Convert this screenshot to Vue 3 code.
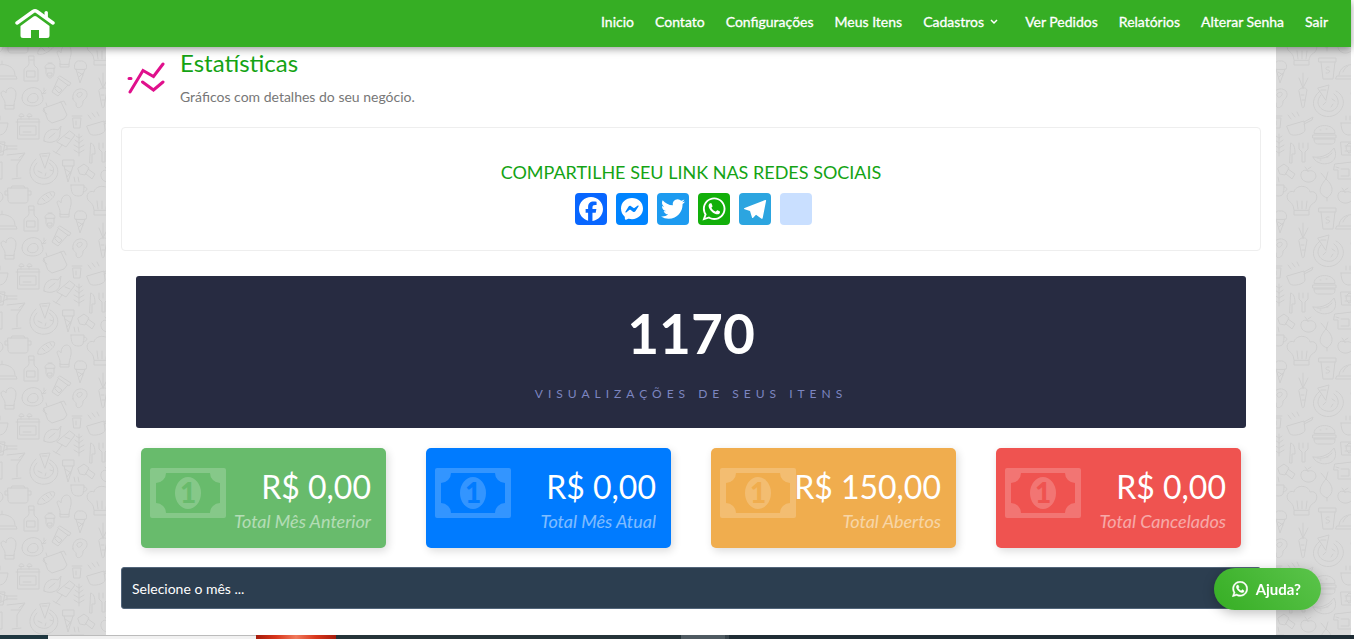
<script setup>
const links = [
  { label: 'Inicio' },
  { label: 'Contato' },
  { label: 'Configurações' },
  { label: 'Meus Itens' },
  { label: 'Cadastros', menu: true },
  { label: 'Ver Pedidos' },
  { label: 'Relatórios' },
  { label: 'Alterar Senha' },
  { label: 'Sair' }
]

const whatsapp =
  'M16.21 4.41C9.973 4.41 4.917 9.465 4.917 15.7c0 2.134.592 4.13 1.62 5.832L4.5 27.59l6.25-2.002a11.241 11.241 0 0 0 5.46 1.404c6.234 0 11.29-5.055 11.29-11.29 0-6.237-5.056-11.292-11.29-11.292zm0 20.69c-1.91 0-3.69-.57-5.173-1.553l-3.61 1.156 1.173-3.49a9.345 9.345 0 0 1-1.79-5.512c0-5.18 4.217-9.4 9.4-9.4 5.183 0 9.397 4.22 9.397 9.4 0 5.188-4.214 9.4-9.398 9.4zm5.293-6.832c-.284-.155-1.673-.906-1.934-1.012-.265-.106-.455-.16-.658.12s-.78.91-.954 1.096c-.176.186-.345.203-.628.048-.282-.154-1.2-.494-2.264-1.517-.83-.795-1.373-1.76-1.53-2.055-.158-.295 0-.445.15-.584.134-.124.3-.326.45-.488.15-.163.203-.28.306-.47.104-.19.06-.36-.005-.506-.066-.147-.59-1.587-.81-2.173-.218-.586-.46-.498-.63-.505-.168-.007-.358-.038-.55-.045-.19-.007-.51.054-.78.332-.277.274-1.05.943-1.1 2.362-.055 1.418.926 2.826 1.064 3.023.137.2 1.874 3.272 4.76 4.537 2.888 1.264 2.9.878 3.43.85.53-.027 1.734-.633 2-1.297.266-.664.287-1.24.22-1.363-.07-.123-.26-.203-.54-.357z'

const networks = [
  { name: 'Facebook', tone: 'facebook', path: 'M28 16c0-6.627-5.373-12-12-12S4 9.373 4 16c0 5.628 3.875 10.35 9.101 11.647v-7.98h-2.474V16H13.1v-1.58c0-4.085 1.849-5.978 5.859-5.978.76 0 2.072.15 2.608.298v3.325c-.283-.03-.775-.045-1.386-.045-1.967 0-2.728.745-2.728 2.683V16h3.92l-.673 3.667h-3.247v8.245C23.395 27.195 28 22.135 28 16' },
  { name: 'Messenger', tone: 'messenger', path: 'M16 5C9.8 5 5 9.5 5 15.6c0 3.2 1.3 5.9 3.5 7.8.2.2.3.4.3.7l.1 1.9c0 .6.6 1 1.2.8l2.200-1c.2-.1.4-.1.6 0 1 .3 2 .4 3.100.4 6.200 0 11-4.500 11-10.600S22.200 5 16 5zm6.600 8.200-3.200 5.100c-.5.8-1.600 1-2.400.4l-2.600-1.900c-.2-.2-.5-.2-.8 0l-3.400 2.600c-.5.3-1.100-.2-.8-.7l3.200-5.100c.5-.8 1.600-1 2.400-.4l2.600 1.900c.2.2.5.2.8 0l3.400-2.600c.5-.3 1.100.2.8.7z' },
  { name: 'Twitter', tone: 'twitter', path: 'M28 8.557a9.913 9.913 0 0 1-2.828.775 4.93 4.93 0 0 0 2.166-2.725 9.738 9.738 0 0 1-3.13 1.194 4.92 4.92 0 0 0-3.593-1.55 4.924 4.924 0 0 0-4.794 6.049c-4.09-.21-7.72-2.17-10.15-5.15a4.942 4.942 0 0 0-.665 2.477c0 1.71.87 3.214 2.19 4.1a4.968 4.968 0 0 1-2.23-.616v.06c0 2.39 1.7 4.38 3.952 4.83-.414.115-.85.174-1.297.174-.318 0-.626-.03-.928-.086a4.935 4.935 0 0 0 4.6 3.42 9.893 9.893 0 0 1-6.114 2.107c-.398 0-.79-.023-1.175-.068a13.953 13.953 0 0 0 7.55 2.213c9.056 0 14.01-7.507 14.01-14.013 0-.213-.005-.426-.015-.637.96-.695 1.795-1.56 2.455-2.55z' },
  { name: 'WhatsApp', tone: 'whatsapp', path: whatsapp },
  { name: 'Telegram', tone: 'telegram', path: 'M26.100 7 5.600 15c-.8.3-.8 1 0 1.300l5.400 1.800 2 6.400c.2.600.8.700 1.200.2l2.800-2.900 5.200 3.800c.7.4 1.300.1 1.500-.7L27.100 7.800c.2-.7-.3-1.100-1-.8z' },
  { name: 'Copiar link', tone: 'blank', path: '' }
]

const cards = [
  { value: 'R$ 0,00', label: 'Total Mês Anterior', tone: 'green' },
  { value: 'R$ 0,00', label: 'Total Mês Atual', tone: 'blue' },
  { value: 'R$ 150,00', label: 'Total Abertos', tone: 'orange' },
  { value: 'R$ 0,00', label: 'Total Cancelados', tone: 'red' }
]
</script>

<template>
  <div class="page">
    <svg class="wallpaper" aria-hidden="true">
      <defs>
        <g id="doodles" fill="none" stroke="#cecece" stroke-width="1" stroke-linejoin="round" stroke-linecap="round">
          <!-- covered dish, bottle, jar -->
          <path d="M137 76h29l1 3h-31zM139 75c1-14 26-14 26 0M152 64v-3M143 72c1-3 3-5 5-6" />
          <path d="M29 56h5v8c0 3 4 3 4 6v11H24V70c0-3 5-3 5-6zM27 71h8v6h-8zM29 60h5" />
          <path d="M45 68c-1-6 11-6 10 0zM46 68v4c0 8 8 8 8 0v-4M48 73h4v3h-4zM48 63h4" />
          <!-- mitts -->
          <path d="M60 64c1-5-3-9-3-12 1-2 3-1 4 1 0-9 9-11 10-3 1 6-2 9-2 14zM60 64v3h9v-3" />
          <path d="M5 105c1-5-4-8-4-12 1-3 4-2 5 0 0-7 10-7 10 1 0 5-2 7-2 11zM5 105v4h9v-4" />
          <!-- bread, pots -->
          <path d="M38 54c-3-4 10-14 16-12 4 4-10 15-16 12zM42 48l3 3M46 45l3 3M50 43l2 3" />
          <path d="M8 38h20v12c0 3-2 3-3 3H11c-2 0-3-1-3-3zM8 41H5v4h3M28 41h3v4h-3M11 38l1-2h12l1 2" />
          <path d="M44 108l17-6 6 13-3 4-12 4-4-3zM47 106l-1-3M60 102l4-1 2 4M44 108l-1 3 4 3" />
          <!-- cones -->
          <path d="M75 69c-2-4 1-9 5-8 5-1 8 4 6 8zM76 69l4 14 5-14M78 72l5 3M79 77l4-4" />
          <path d="M63 10h11v6H63zM64 16l4 16 5-16M65 19l6 4M67 27l5-7" />
          <!-- chef hat -->
          <path d="M94 60c-1-7-3-7-6-10-3-6 2-10 6-8 1-7 14-8 16 0 6-2 9 5 5 10-3 2-5 3-6 8zM94 61v4h15v-4M98 59l-1-8M102 59v-8M106 59l1-8" />
          <!-- roast on a plate -->
          <path d="M22 98c0-12 18-14 20-4l4-4M42 94l4-1M42 95c4 7-3 11-9 11s-11-2-11-8M28 101c-3-5 8-12 10-4 1 5-6 8-10 4zM44 91v-3" />
          <!-- tilted cup -->
          <path d="M60 76l11 7-2 3-11-8zM58 79l-6 13 6 4 10-11M57 86l5 4-3 3-4-4z" />
          <!-- steak -->
          <path d="M73 99c-2-9 8-13 13-8 3 5-1 8-3 10 0 8-7 8-7 4 1-3-2-3-3-6zM77 94c3-3 6-2 5 1-1 2-5 4-5 0z" />
          <!-- stove -->
          <path d="M18 119h21v20H18zM16 122h24M20 126h16v9H20zM23 132h8M19 116c0-3 5-3 5 0zM27 116c0-3 5-3 5 0zM21 119v-2M29 119v-2" />
          <!-- small cup, saucepan -->
          <path d="M73 118h8l-1 10h-6zM72 116h10M76 121v4" />
          <path d="M87 126l17-5 1 9c0 4-12 7-15 4zM104 122l9-5-1 3-8 4M91 119l-3-4M95 117l-3-4M99 116l-2-4" />
          <!-- lemon, glasses -->
          <path d="M44 141c-1-8 6-14 14-11l3-4-1 6c1 8-8 13-16 9zM49 138l6-5" />
          <path d="M70 131l5 4-9 12-9-5zM62 145l-6 8M53 151l7 4M65 137l5 2" />
          <path d="M7 5l18-2-8 12v12M12 29l9-1M11 10h9M19 8l5-4" />
          <!-- herb -->
          <path d="M79 134v22M79 138l-3-2M79 138l3-2M79 143l-4-3M79 143l4-3M79 148l-5-3M79 148l5-3M79 153l-5-3M79 153l5-3" />
          <!-- cutlery -->
          <path d="M91 143c4 1 4 8 4 11h-3v9h-2zM99 143v6l3 3v10h3v-10l3-3v-6M103 143v5" />
          <!-- carrot -->
          <path d="M99 90c2-3 7-3 8 0l-3 17c-1 1-2 1-2 0zM103 88l-4-10M103 88v-15M103 88l5-10M101 95h3M102 100h3" />
          <!-- soda -->
          <path d="M119 58h17v4h-17zM121 62l2 17h10l2-17M129 67c-4-1-4 3-1 3s2 4-2 3" />
          <!-- pizzas -->
          <path d="M120 91c-16 13 0 31 15 24 12-7 10-20 1-24M121 95c-8 9 1 18 11 16 8-3 8-13 2-17M118 88l11-3-3 15zM121 90h5M123 105l3-3M132 99l3 2M131 107l2-3" />
          <path d="M36 9c-14 13-2 30 14 24 11-6 10-18 0-23M37 13c-8 8 0 17 10 15 8-3 9-11 2-15M40 4l10-1-5 15zM42 6h5M38 21l4 2M50 20l3 1M45 26l1-3" />
          <!-- burger, melon -->
          <path d="M114 133c0-10 21-10 21 0zM113 135h23v3h-23zM114 139h21c0 5-2 5-4 5h-13c-2 0-4-1-4-5M120 130h1M126 129h1" />
          <path d="M113 157c9 1 16-2 21-9 8 17-16 21-21 9zM117 158c7 1 11-1 15-5M120 160h1M127 157h1" />
          <!-- jug, hammer -->
          <path d="M135 14l17-2v17h-14v-9h-4zM141 19h8v7h-8M136 17l3 1" />
          <path d="M78 18l6-4 5 4-4 7-5-1zM88 19l7 5-3 5-7-6" />
          <!-- fruit -->
          <path d="M108 21c-6-3-9 3-6 8 3 4 11 5 14-2 0-6-4-7-8-6zM108 21l-3-4M108 19l3-2" />
          <path d="M145 42c-6-3-9 3-6 8 3 4 11 5 14-2 0-6-4-7-8-6zM145 42l-3-4M145 40l3-2" />
          <path d="M126 29c-8 9-8 15 1 19 7-5 7-12-1-19zM126 29l-5-6M126 29l2-7M127 48v3" />
          <!-- coffee, ladle, bowl, glass -->
          <path d="M71 35h13c0 9-1 11-6 11s-7-3-7-11zM84 37c5 0 3 5-1 5M75 32l-1-5M79 32l-1-5" />
          <path d="M149 143l8 3h10M149 153l8-4h10M157 146v4M149 143c-4 3-4 7 0 10" />
          <path d="M141 123h17c-1 8-4 12-9 12s-8-4-8-12zM146 120v-4M150 120v-4" />
          <path d="M141 142h14l-2 13h-11zM145 146h6v5h-6" />
        </g>
        <pattern id="kitchen" width="150" height="150" patternUnits="userSpaceOnUse">
          <use href="#doodles" />
          <use href="#doodles" x="-150" />
          <use href="#doodles" y="-150" />
          <use href="#doodles" x="-150" y="-150" />
        </pattern>
      </defs>
      <rect width="100%" height="100%" fill="#dadada" />
      <rect width="100%" height="100%" fill="url(#kitchen)" />
    </svg>

    <header class="topbar">
      <a class="home" href="#" aria-label="Inicio">
        <svg width="40" height="30" viewBox="0 0 40 30" aria-hidden="true">
          <path d="M2 14 18 2.500Q20 1.200 22 2.500L38 14" fill="none" stroke="#fff" stroke-width="3.400" stroke-linecap="round" stroke-linejoin="round" />
          <path d="M29.500 7V3.500q0-1.500 1.700-1.500t1.700 1.500V10z" fill="#fff" />
          <path d="M5.500 17 18.500 7.500q1.500-1 3 0L34.500 17v9.500q0 2.500-2.500 2.500h-8v-8h-8v8H8q-2.500 0-2.500-2.500z" fill="#fff" />
        </svg>
      </a>
      <nav class="menu">
        <a v-for="link in links" :key="link.label" href="#" :class="{ dropdown: link.menu }">
          {{ link.label }}
          <svg v-if="link.menu" width="8" height="6" viewBox="0 0 8 6" aria-hidden="true">
            <path d="M1 1l3 3 3-3" fill="none" stroke="currentColor" stroke-width="1.500" />
          </svg>
        </a>
      </nav>
    </header>

    <main class="content">
      <section class="intro">
        <svg class="chart" width="38" height="34" viewBox="0 0 38 34" fill="none" stroke="#e0108c" stroke-width="3" stroke-linecap="round" aria-hidden="true">
          <path d="M3 31 16 9.500l10.500 6L36 3" />
          <path d="M15.500 21 26.500 29 36 21M2 17.500h2" />
        </svg>
        <div>
          <h1>Estatísticas</h1>
          <p>Gráficos com detalhes do seu negócio.</p>
        </div>
      </section>

      <section class="share">
        <h2>COMPARTILHE SEU LINK NAS REDES SOCIAIS</h2>
        <div class="networks">
          <a v-for="n in networks" :key="n.name" href="#" :class="n.tone" :aria-label="n.name">
            <svg width="32" height="32" viewBox="0 0 32 32" aria-hidden="true"><path :d="n.path" fill="#fff" /></svg>
          </a>
        </div>
      </section>

      <section class="views">
        <strong>1170</strong>
        <span>VISUALIZAÇÕES DE SEUS ITENS</span>
      </section>

      <section class="cards">
        <article v-for="card in cards" :key="card.label" class="card" :class="card.tone">
          <svg class="note" width="76" height="50" viewBox="0 0 76 50" aria-hidden="true">
            <path fill="#fff" fill-opacity=".2" fill-rule="evenodd" d="M2 0h72q2 0 2 2v46q0 2-2 2H2q-2 0-2-2V2q0-2 2-2zM16 5A10 10 0 0 1 6 15v20a10 10 0 0 1 10 10h44a10 10 0 0 1 10-10V15A10 10 0 0 1 60 5z" />
            <ellipse cx="38" cy="25" rx="13" ry="16" fill="#fff" fill-opacity=".2" />
            <text class="unit" x="38" y="35" text-anchor="middle">1</text>
          </svg>
          <div class="figures">
            <p class="value">{{ card.value }}</p>
            <p class="label">{{ card.label }}</p>
          </div>
        </article>
      </section>

      <select class="month" aria-label="Selecione o mês">
        <option>Selecione o mês ...</option>
      </select>
    </main>

    <footer class="strip" aria-hidden="true">
      <i class="start"></i><i class="search"></i><i class="art"></i><i class="tasks"></i><i class="active"></i><i class="tray"></i>
    </footer>

    <a class="help" href="#">
      <svg width="16" height="16" viewBox="4 4 24 24" aria-hidden="true"><path :d="whatsapp" fill="#fff" stroke="#fff" stroke-width=".8" /></svg>
      Ajuda?
    </a>
  </div>
</template>

<style>
body {
  background: #fff;
}
</style>

<style scoped>
* {
  box-sizing: border-box;
}

.page {
  position: relative;
  display: flex;
  flex-direction: column;
  min-height: 100vh;
  font-family: Lato, "Liberation Sans", sans-serif;
  font-size: 14px;
}

a {
  color: inherit;
  text-decoration: none;
}

h1,
h2,
p {
  margin: 0;
  font-weight: 400;
}

.wallpaper {
  position: absolute;
  top: 0;
  left: 0;
  width: calc(100% - 3px);
  height: 100%;
}

.topbar {
  position: relative;
  z-index: 2;
  display: flex;
  align-items: center;
  justify-content: space-between;
  height: 47px;
  margin-right: 3px;
  padding: 0 23px 0 15px;
  background: #36ae24;
  box-shadow: 0 2px 8px rgba(0, 0, 0, 0.4);
  color: #fff;
}

.home svg,
.networks svg {
  display: block;
}

.menu {
  display: flex;
  gap: 21px;
  padding-bottom: 3px;
  line-height: 20px;
  -webkit-text-stroke: 0.3px #fff;
}

.dropdown {
  display: flex;
  align-items: center;
  gap: 6px;
  padding-right: 6px;
}

.content {
  position: relative;
  flex: 1;
  margin: 0 78px 0 106px;
  padding: 0 15px 26px;
  background: #fff;
}

.intro {
  display: flex;
  gap: 15px;
  height: 80px;
  padding-left: 6px;
}

.chart {
  margin-top: 14px;
}

h1 {
  color: #14a314;
  font-size: 24px;
  line-height: 32px;
}

.intro p {
  margin-top: 8px;
  color: #777;
  line-height: 20px;
}

.share {
  padding: 33px 0 25px;
  border: 1px solid #eee;
  border-radius: 4px;
  text-align: center;
}

h2 {
  color: #14a314;
  font-size: 18px;
  line-height: 22px;
}

.networks {
  display: flex;
  justify-content: center;
  gap: 9px;
  margin-top: 10px;
  padding-left: 5px;
}

.networks a {
  overflow: hidden;
  border-radius: 4px;
}

.facebook {
  background: #0866ff;
}

.messenger {
  background: #0084ff;
}

.twitter {
  background: #1d9bf0;
}

.whatsapp {
  background: #12af0a;
}

.telegram {
  background: #2ca5e0;
}

.blank {
  background: #c9dfff;
}

.views {
  display: flex;
  flex-direction: column;
  align-items: center;
  height: 152px;
  margin: 25px 15px 0;
  padding-top: 24px;
  border-radius: 3px;
  background: #272b41;
}

.views strong {
  color: #fff;
  font-size: 55px;
  line-height: 66px;
}

.views span {
  margin-top: 20px;
  color: #7d86c0;
  font-size: 12px;
  line-height: 16px;
  letter-spacing: 5px;
}

.cards {
  display: grid;
  grid-template-columns: repeat(4, minmax(0, 1fr));
  gap: 40px;
  margin: 20px 20px 0;
}

.card {
  display: flex;
  height: 100px;
  padding: 20px 15px 0 9px;
  border-radius: 5px;
  background: var(--tone);
  box-shadow: 2px 3px 8px rgba(0, 0, 0, 0.14);
  color: #fff;
}

.green {
  --tone: #68bb6c;
}

.blue {
  --tone: #007bff;
}

.orange {
  --tone: #f0ad4e;
}

.red {
  --tone: #ef5350;
}

.note {
  flex: none;
}

.unit {
  fill: var(--tone);
  font: 900 28px Lato, sans-serif;
}

.figures {
  display: flex;
  flex: 1;
  flex-direction: column;
  align-items: flex-end;
  min-width: 0;
  white-space: nowrap;
}

.value {
  font-size: 32px;
  line-height: 38px;
}

.label {
  margin-top: 4px;
  font-size: 18px;
  font-style: italic;
  line-height: 22px;
  opacity: 0.5;
}

.month {
  display: block;
  width: 100%;
  height: 42px;
  margin-top: 19px;
  padding: 0 10px;
  border: 1px solid #52657a;
  border-radius: 3px;
  appearance: none;
  background: #2c3e50;
  color: #fff;
  font: 14px Lato, "Liberation Sans", sans-serif;
}

.strip {
  position: relative;
  display: flex;
  height: 4px;
  background: #1f2d35;
}

.start {
  width: 48px;
  background: #1f3740;
}

.search {
  width: 208px;
  border-top: 1px solid #bbb;
  background: #f1f1f1;
}

.art {
  width: 80px;
  background: linear-gradient(90deg, #a51b0b, #d8361c 25%, #f07a5c 50%, #d8361c 75%, #a51b0b);
}

.tasks {
  width: 345px;
  background: #253439;
}

.active {
  width: 48px;
  border-right: 4px solid #39454c;
  background: #4f5a61;
}

.tray {
  flex: 1;
}

.help {
  position: fixed;
  right: 33px;
  bottom: 29px;
  z-index: 3;
  display: flex;
  align-items: center;
  gap: 8px;
  height: 42px;
  padding: 0 20px 0 18px;
  border-radius: 21px;
  background: linear-gradient(45deg, #36ae24, #5bc44b);
  box-shadow: 0 3px 12px rgba(0, 0, 0, 0.25);
  color: #fff;
  font-size: 15px;
  font-weight: 700;
}
</style>
